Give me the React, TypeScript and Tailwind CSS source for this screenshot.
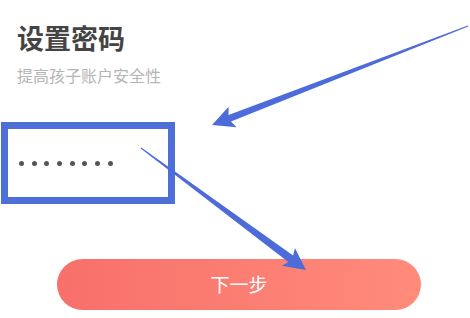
import React from "react";

function arrowPoints(
  tx: number,
  ty: number,
  hx: number,
  hy: number,
  tailW: number,
  shaftW: number,
  headLen: number,
  headW: number
): string {
  const dx = hx - tx;
  const dy = hy - ty;
  const L = Math.hypot(dx, dy);
  const ux = dx / L;
  const uy = dy / L;
  const px = -uy;
  const py = ux;
  const bx = hx - ux * headLen;
  const by = hy - uy * headLen;
  const pts: [number, number][] = [
    [tx + (px * tailW) / 2, ty + (py * tailW) / 2],
    [bx + (px * shaftW) / 2, by + (py * shaftW) / 2],
    [bx - ux * 3 + (px * headW) / 2, by - uy * 3 + (py * headW) / 2],
    [hx, hy],
    [bx - ux * 3 - (px * headW) / 2, by - uy * 3 - (py * headW) / 2],
    [bx - (px * shaftW) / 2, by - (py * shaftW) / 2],
    [tx - (px * tailW) / 2, ty - (py * tailW) / 2],
  ];
  return pts.map((p) => `${p[0].toFixed(1)},${p[1].toFixed(1)}`).join(" ");
}

export default function App() {
  const font = { fontFamily: '"Noto Sans CJK SC", "Noto Sans", sans-serif' };
  return (
    <div
      className="relative w-[470px] h-[318px] bg-white overflow-hidden flex flex-col"
      style={font}
    >
      <h1 className="ml-[17px] mt-[22px] text-[27px] leading-[32px] font-bold text-[#444444]">
        设置密码
      </h1>
      <p className="ml-[17px] mt-[11px] text-[16px] leading-[20px] text-[#b5b5b5]">
        提高孩子账户安全性
      </p>
      <div className="ml-[1px] mt-[37px] w-[174px] h-[82px] border-[7px] border-[#4e6ed8] flex items-center pl-[11px]">
        <div className="flex items-center gap-[7.7px]">
          {Array.from({ length: 8 }).map((_, i) => (
            <span key={i} className="w-[5px] h-[5px] rounded-full bg-[#555555]" />
          ))}
        </div>
      </div>
      <button className="ml-[57px] mt-[55px] w-[364px] h-[51px] rounded-full bg-gradient-to-r from-[#f7706a] to-[#ff8b7b] text-white text-[19px] flex items-center justify-center">
        下一步
      </button>

      <svg
        className="absolute inset-0 pointer-events-none"
        width={470}
        height={318}
        viewBox="0 0 470 318"
      >
        <polygon
          points={arrowPoints(468, 26, 212, 125, 1, 7, 19, 22)}
          fill="#4d6cd9"
        />
        <polygon
          points={arrowPoints(141, 148, 306, 270, 1, 8, 19, 22)}
          fill="#4d6cd9"
        />
      </svg>
    </div>
  );
}
